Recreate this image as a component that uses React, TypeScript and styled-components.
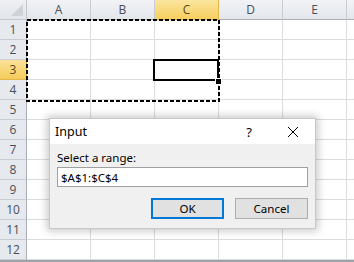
import React from 'react';
import styled, { createGlobalStyle } from 'styled-components';

const GlobalStyle = createGlobalStyle`
  html, body {
    margin: 0;
    padding: 0;
    background: #ffffff;
    overflow: hidden;
  }
`;

const COLUMNS = ['A', 'B', 'C', 'D', 'E', ''];
const ROWS = Array.from({ length: 12 }, (_, i) => i + 1);
const ACTIVE_COL = 'C';
const ACTIVE_ROW = 3;

const Sheet = styled.div`
  position: relative;
  width: 354px;
  height: 262px;
  overflow: hidden;
  font-family: 'Open Sans', 'Noto Sans', sans-serif;
  background: #ffffff;
  border-bottom: 2px solid #9ea3aa;
  box-sizing: border-box;
`;

const Grid = styled.div`
  display: grid;
  grid-template-columns: 27px repeat(6, 64px);
  grid-auto-rows: 20px;
`;

const Corner = styled.div`
  position: relative;
  background: linear-gradient(#eef0f3, #e2e5ea);
  border-right: 1px solid #c3c7cd;
  border-bottom: 1px solid #c3c7cd;
  box-sizing: border-box;
`;

const CornerTriangle = styled.div`
  position: absolute;
  right: 3px;
  bottom: 3px;
  width: 0;
  height: 0;
  border-left: 12px solid transparent;
  border-bottom: 12px solid #cfd3d8;
`;

const ColHeader = styled.div<{ $active?: boolean }>`
  display: flex;
  align-items: center;
  justify-content: center;
  font-size: 12px;
  color: ${(p) => (p.$active ? '#5b4a1d' : '#4a4f57')};
  background: ${(p) =>
    p.$active
      ? 'linear-gradient(#fbe59f, #f6cf5e)'
      : 'linear-gradient(#f1f3f6, #e3e6eb)'};
  border-right: 1px solid ${(p) => (p.$active ? '#e2b84b' : '#c9cdd3')};
  border-bottom: 1px solid ${(p) => (p.$active ? '#d9a92f' : '#a9aeb6')};
  box-sizing: border-box;
`;

const RowHeader = styled.div<{ $active?: boolean }>`
  display: flex;
  align-items: center;
  justify-content: center;
  font-size: 12px;
  color: ${(p) => (p.$active ? '#5b4a1d' : '#4a4f57')};
  background: ${(p) =>
    p.$active ? 'linear-gradient(#fbe29a, #f5cc5a)' : '#e6e9ee'};
  border-right: 1px solid ${(p) => (p.$active ? '#d9a92f' : '#a9aeb6')};
  border-bottom: 1px solid ${(p) => (p.$active ? '#e2b84b' : '#c9cdd3')};
  box-sizing: border-box;
`;

const Cell = styled.div`
  border-right: 1px solid #dadcdf;
  border-bottom: 1px solid #dadcdf;
  box-sizing: border-box;
`;

const Marquee = styled.svg`
  position: absolute;
  left: 26px;
  top: 19px;
  width: 194px;
  height: 83px;
  overflow: visible;
`;

const ActiveCell = styled.div`
  position: absolute;
  left: 153px;
  top: 59px;
  width: 66px;
  height: 22px;
  border: 2px solid #000000;
  box-sizing: border-box;
`;

const FillHandle = styled.div`
  position: absolute;
  left: 215px;
  top: 78px;
  width: 5px;
  height: 5px;
  background: #000000;
  border: 1px solid #ffffff;
`;

const Dialog = styled.div`
  position: absolute;
  left: 49px;
  top: 118px;
  width: 267px;
  height: 111px;
  background: #f0f0f0;
  border: 1px solid #c8c8c8;
  box-sizing: border-box;
  box-shadow: 0 0 8px 2px rgba(0, 0, 0, 0.22);
  font-family: 'Noto Sans', 'Open Sans', sans-serif;
  color: #000000;
  display: flex;
  flex-direction: column;
`;

const TitleBar = styled.div`
  height: 25px;
  background: #ffffff;
  display: flex;
  align-items: center;
  padding-left: 5px;
  font-size: 12.5px;
`;

const Title = styled.span`
  flex: 1;
`;

const TitleButton = styled.div`
  width: 44px;
  height: 25px;
  display: flex;
  align-items: center;
  justify-content: center;
  font-size: 13px;
`;

const Body = styled.div`
  display: flex;
  flex-direction: column;
  padding: 7px 7px 0 7px;
`;

const Label = styled.div`
  font-size: 11.5px;
  line-height: 14px;
  margin-bottom: 2px;
`;

const Field = styled.div`
  height: 20px;
  background: #ffffff;
  border: 1px solid #a0a0a0;
  box-sizing: border-box;
  display: flex;
  align-items: center;
  padding-left: 3px;
  font-size: 11.5px;
`;

const ButtonRow = styled.div`
  display: flex;
  justify-content: flex-end;
  gap: 11px;
  margin-top: 11px;
`;

const Button = styled.div<{ $default?: boolean }>`
  width: 73px;
  height: 21px;
  box-sizing: border-box;
  background: #e1e1e1;
  border: ${(p) => (p.$default ? '2px solid #0078d7' : '1px solid #adadad')};
  display: flex;
  align-items: center;
  justify-content: center;
  font-size: 11.5px;
`;

const App: React.FC = () => {
  return (
    <>
      <GlobalStyle />
      <Sheet>
        <Grid>
          <Corner>
            <CornerTriangle />
          </Corner>
          {COLUMNS.map((c, i) => (
            <ColHeader key={i} $active={c === ACTIVE_COL}>
              {c}
            </ColHeader>
          ))}
          {ROWS.map((r) => (
            <React.Fragment key={r}>
              <RowHeader $active={r === ACTIVE_ROW}>{r}</RowHeader>
              {COLUMNS.map((_, i) => (
                <Cell key={i} />
              ))}
            </React.Fragment>
          ))}
        </Grid>

        <ActiveCell />
        <Marquee viewBox="0 0 194 83">
          <rect
            x="1"
            y="1"
            width="192"
            height="81"
            fill="none"
            stroke="#000"
            strokeWidth="2"
            strokeDasharray="4 2"
          />
        </Marquee>
        <FillHandle />

        <Dialog>
          <TitleBar>
            <Title>Input</Title>
            <TitleButton>?</TitleButton>
            <TitleButton>
              <svg width="12" height="12" viewBox="0 0 12 12">
                <path d="M1 1 L11 11 M11 1 L1 11" stroke="#000" strokeWidth="1" />
              </svg>
            </TitleButton>
          </TitleBar>
          <Body>
            <Label>Select a range:</Label>
            <Field>$A$1:$C$4</Field>
            <ButtonRow>
              <Button $default>OK</Button>
              <Button>Cancel</Button>
            </ButtonRow>
          </Body>
        </Dialog>
      </Sheet>
    </>
  );
};

export default App;
